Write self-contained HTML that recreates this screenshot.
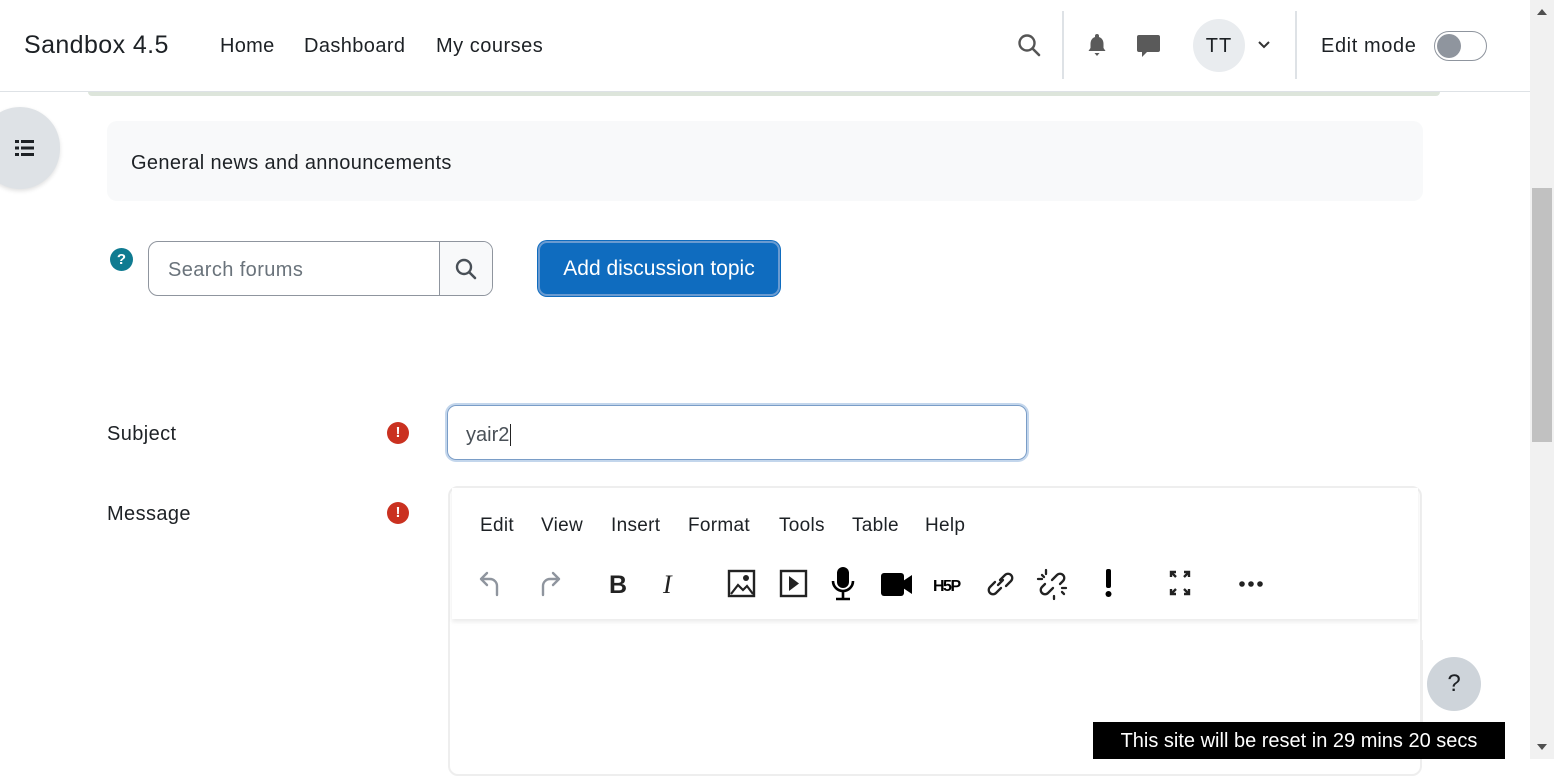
<!DOCTYPE html>
<html><head><meta charset="utf-8"><style>
*{margin:0;padding:0;box-sizing:border-box}
body{width:1554px;height:759px;overflow:hidden;background:#fff;font-family:"Liberation Sans",sans-serif;color:#1d2125;position:relative}
.a{position:absolute}
.t{white-space:nowrap}
</style></head><body>
<!-- header -->
<div class="a" style="left:0;top:0;width:1530px;height:92px;border-bottom:1px solid #dee2e6;background:#fff"></div>
<div class="a t" style="left:24px;top:31px;font-size:25px;letter-spacing:0.4px">Sandbox 4.5</div>
<div class="a t" style="left:220px;top:35px;font-size:20px;letter-spacing:0.3px">Home</div>
<div class="a t" style="left:304px;top:35px;font-size:20px;letter-spacing:0.4px">Dashboard</div>
<div class="a t" style="left:436px;top:35px;font-size:20px;letter-spacing:0.5px">My courses</div>
<svg class="a" style="left:1017px;top:33px" width="26" height="26" viewBox="0 0 26 26"><circle cx="10" cy="10" r="7.5" fill="none" stroke="#555" stroke-width="2.4"/><path d="M15.5 15.5L22 22" stroke="#555" stroke-width="2.6" stroke-linecap="round"/></svg>
<div class="a" style="left:1062px;top:11px;width:2px;height:68px;background:#dee2e6"></div>
<svg class="a" style="left:1086px;top:33px" width="22" height="24" viewBox="0 0 22 24"><path d="M11 1a2 2 0 0 1 2 2v1c3 1 4.5 3.5 4.5 7v4l2 3H2.5l2-3v-4c0-3.5 1.5-6 4.5-7V3a2 2 0 0 1 2-2zM8.5 20h5l-2.5 3z" fill="#5a5a5a"/></svg>
<svg class="a" style="left:1136px;top:34px" width="25" height="24" viewBox="0 0 25 24"><path d="M3 1h19a2 2 0 0 1 2 2v13a2 2 0 0 1-2 2H11l-5 5v-5H3a2 2 0 0 1-2-2V3a2 2 0 0 1 2-2z" fill="#5a5a5a"/></svg>
<div class="a" style="left:1193px;top:19px;width:52px;height:53px;border-radius:50%;background:#e9ecef"></div>
<div class="a t" style="left:1193px;top:35px;width:52px;text-align:center;font-size:20px;letter-spacing:1px">TT</div>
<svg class="a" style="left:1257px;top:40px" width="14" height="10" viewBox="0 0 14 10"><path d="M2 2l5 5 5-5" fill="none" stroke="#333" stroke-width="2"/></svg>
<div class="a" style="left:1295px;top:11px;width:2px;height:68px;background:#dee2e6"></div>
<div class="a t" style="left:1321px;top:35px;font-size:20px;letter-spacing:0.6px">Edit mode</div>
<div class="a" style="left:1434px;top:31px;width:53px;height:30px;border-radius:15px;border:1px solid #8f959e;background:#fff"></div>
<div class="a" style="left:1437px;top:34px;width:24px;height:24px;border-radius:50%;background:#8f959e"></div>
<!-- green strip -->
<div class="a" style="left:88px;top:92px;width:1352px;height:4px;background:#dde5db;border-radius:0 0 6px 6px"></div>
<!-- drawer toggle -->
<div class="a" style="left:-20px;top:107px;width:80px;height:82px;border-radius:41px;background:#dee2e6;box-shadow:0 2px 4px rgba(0,0,0,.12)"></div>
<svg class="a" style="left:15px;top:139px" width="24" height="18" viewBox="0 0 24 18"><g fill="#1d2125"><rect x="0" y="1" width="4" height="3"/><rect x="0" y="7.5" width="4" height="3"/><rect x="0" y="14" width="4" height="3"/><rect x="6" y="1" width="13" height="3"/><rect x="6" y="7.5" width="13" height="3"/><rect x="6" y="14" width="13" height="3"/></g></svg>
<!-- news box -->
<div class="a" style="left:107px;top:121px;width:1316px;height:80px;border-radius:10px;background:#f8f9fa"></div>
<div class="a t" style="left:131px;top:152px;font-size:20px;letter-spacing:0.35px">General news and announcements</div>
<!-- search -->
<div class="a" style="left:110px;top:248px;width:23px;height:23px;border-radius:50%;background:#0f7b91;color:#fff;font-weight:bold;font-size:15px;text-align:center;line-height:23px">?</div>
<div class="a" style="left:148px;top:241px;width:345px;height:55px;border:1px solid #8f959e;border-radius:10px;background:#fff"></div>
<div class="a" style="left:439px;top:242px;width:53px;height:53px;border-left:1px solid #8f959e;background:#f8f9fa;border-radius:0 9px 9px 0"></div>
<div class="a t" style="left:168px;top:259px;font-size:20px;color:#6a737b;letter-spacing:0.4px">Search forums</div>
<svg class="a" style="left:454px;top:257px" width="24" height="24" viewBox="0 0 24 24"><circle cx="10" cy="10" r="7" fill="none" stroke="#495057" stroke-width="2.4"/><path d="M15 15l6 6" stroke="#495057" stroke-width="2.6" stroke-linecap="round"/></svg>
<div class="a" style="left:538px;top:241px;width:242px;height:55px;border-radius:9px;background:#0f6cbf;border:2px solid #6a9bd1;box-shadow:0 0 0 1px #0f6cbf"></div>
<div class="a t" style="left:538px;top:257px;width:242px;text-align:center;font-size:21px;color:#fff">Add discussion topic</div>
<!-- form -->
<div class="a t" style="left:107px;top:423px;font-size:20px;letter-spacing:0.4px">Subject</div>
<div class="a t" style="left:107px;top:503px;font-size:20px;letter-spacing:0.4px">Message</div>
<div class="a" style="left:387px;top:422px;width:22px;height:22px;border-radius:50%;background:#ca3120;color:#fff;font-weight:bold;font-size:15px;text-align:center;line-height:22px">!</div>
<div class="a" style="left:387px;top:502px;width:22px;height:22px;border-radius:50%;background:#ca3120;color:#fff;font-weight:bold;font-size:15px;text-align:center;line-height:22px">!</div>
<div class="a" style="left:447px;top:405px;width:580px;height:55px;border:1px solid #7a9dc7;border-radius:9px;box-shadow:0 0 0 2px #c3d6ec"></div>
<div class="a t" style="left:466px;top:424px;font-size:20px;color:#495057">yair2<span style="border-left:1px solid #222;margin-left:1px"></span></div>
<!-- editor -->
<div class="a" style="left:448px;top:486px;width:974px;height:290px;border:2px solid #eee;border-radius:10px;background:#fff"></div>
<div class="a" style="left:452px;top:488px;width:966px;height:131px;background:#fff;box-shadow:0 3px 4px rgba(0,0,0,.08)"></div>
<div class="a t" style="left:480px;top:515px;font-size:19px;letter-spacing:0.3px">Edit</div>
<div class="a t" style="left:541px;top:515px;font-size:19px;letter-spacing:0.3px">View</div>
<div class="a t" style="left:611px;top:515px;font-size:19px;letter-spacing:0.3px">Insert</div>
<div class="a t" style="left:688px;top:515px;font-size:19px;letter-spacing:0.3px">Format</div>
<div class="a t" style="left:779px;top:515px;font-size:19px;letter-spacing:0.3px">Tools</div>
<div class="a t" style="left:852px;top:515px;font-size:19px;letter-spacing:0.3px">Table</div>
<div class="a t" style="left:925px;top:515px;font-size:19px;letter-spacing:0.3px">Help</div>
<!-- toolbar icons -->
<svg class="a" style="left:470px;top:566px" width="820" height="36" viewBox="0 0 820 36">
<g fill="none" stroke="#8f959e" stroke-width="2.4" stroke-linecap="round" stroke-linejoin="round">
<path d="M17 7l-6 6 6 6M11 13h9a7 7 0 0 1 7 7v9"/>
<path d="M83 7l6 6-6 6M89 13h-9a7 7 0 0 0-7 7v9"/>
</g>
<text x="139" y="27" font-family="Liberation Sans" font-weight="bold" font-size="25" fill="#222">B</text>
<text x="193" y="27" font-family="Liberation Serif" font-style="italic" font-size="26" fill="#222">I</text>
<g fill="none" stroke="#222" stroke-width="2.4"><rect x="259" y="5" width="25" height="25"/><rect x="311" y="5" width="25" height="25"/></g>
<circle cx="276" cy="12" r="3" fill="#222"/><path d="M261 28l7-9 5 5 4-4 6 8" fill="none" stroke="#222" stroke-width="2.2"/>
<path d="M319 10l10 7.5-10 7.5z" fill="#222"/>
<rect x="367" y="1" width="12" height="21" rx="6" fill="#000"/><path d="M363 15a10 10 0 0 0 20 0M373 25v7M366 33h14" fill="none" stroke="#000" stroke-width="2.6"/>
<rect x="411" y="7" width="23" height="23" rx="3" fill="#000"/><path d="M433 15l9-6v19l-9-6z" fill="#000"/>
<text x="463" y="25" font-family="Liberation Sans" font-weight="bold" font-size="16" letter-spacing="-1.5" fill="#000">H5P</text>
<g fill="none" stroke="#222" stroke-width="2.3" stroke-linecap="round"><path d="M530 14l5-5a4 4 0 0 1 6 6l-5 5M531 22l-5 5a4 4 0 0 1-6-6l5-5M528 19l5-5"/>
<path d="M582 14l5-5a4 4 0 0 1 6 6l-3 3M583 22l-5 5a4 4 0 0 1-6-6l3-3M576 4v4M584 30v3M572 9l2 2M592 26l2 2M568 13h4M592 22h4"/></g>
<rect x="636" y="3" width="5" height="19" rx="2" fill="#000"/><circle cx="638.5" cy="28" r="3" fill="#000"/>
<g fill="none" stroke="#222" stroke-width="2.4"><path d="M701 11V6h5M714 6h5v5M701 23v5h5M719 23v5h-5"/><path d="M702 7l4 4M718 7l-4 4M702 27l4-4M718 27l-4-4"/></g>
<circle cx="772" cy="18" r="2.8" fill="#222"/><circle cx="781" cy="18" r="2.8" fill="#222"/><circle cx="790" cy="18" r="2.8" fill="#222"/>
</svg>
<!-- help button -->
<div class="a" style="left:1421px;top:640px;width:2px;height:100px;background:#eee"></div>
<div class="a" style="left:1427px;top:657px;width:54px;height:54px;border-radius:50%;background:#ced4da;font-size:24px;text-align:center;line-height:54px">?</div>
<!-- reset banner -->
<div class="a t" style="left:1093px;top:722px;width:412px;height:37px;background:#000;color:#fff;font-size:20px;text-align:center;line-height:38px">This site will be reset in 29 mins 20 secs</div>
<!-- scrollbar -->
<div class="a" style="left:1530px;top:0;width:24px;height:759px;background:#f1f1f1"></div>
<div class="a" style="left:1532px;top:188px;width:20px;height:254px;background:#c1c1c1"></div>
<svg class="a" style="left:1536px;top:8px" width="12" height="8"><path d="M1 7l5-6 5 6z" fill="#505050"/></svg>
<svg class="a" style="left:1536px;top:743px" width="12" height="8"><path d="M1 1l5 6 5-6z" fill="#505050"/></svg>
</body></html>
